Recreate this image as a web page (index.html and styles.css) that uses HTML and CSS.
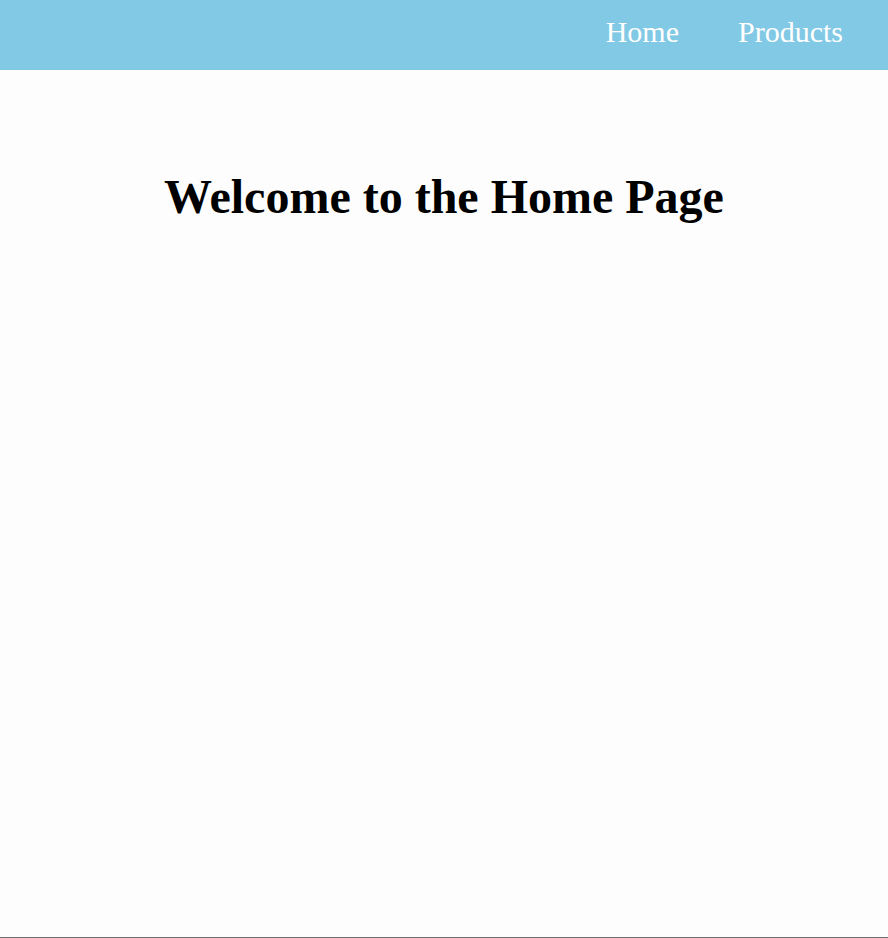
FILE: index.html
```html
<!DOCTYPE html>
<html lang="en">
<head>
<meta charset="utf-8">
<title>Home</title>
<link rel="stylesheet" href="styles.css">
</head>
<body>
<div class="page">
  <header class="topbar">
    <nav class="nav">
      <a class="nav-link" href="#">Home</a>
      <a class="nav-link" href="#">Products</a>
    </nav>
  </header>
  <main class="content">
    <h1 class="title">Welcome to the Home Page</h1>
  </main>
</div>
</body>
</html>
```
FILE: styles.css
```css
html, body {
  margin: 0;
  padding: 0;
  background: #fdfdfd;
  font-family: "Liberation Serif", "Times New Roman", serif;
}
.page {
  min-height: 100vh;
  box-sizing: border-box;
  border-bottom: 1px solid #6e6e6e;
  display: flex;
  flex-direction: column;
}
.topbar {
  height: 70px;
  background: #82c9e5;
  display: flex;
  align-items: center;
  justify-content: flex-end;
  padding-right: 45px;
}
.nav {
  display: flex;
  gap: 59px;
  margin-top: -6px;
}
.nav-link {
  color: #ffffff;
  text-decoration: none;
  font-size: 30px;
}
.content {
  flex: 1;
}
.title {
  margin: 99px 0 0;
  text-align: center;
  font-size: 48px;
  font-weight: bold;
  color: #000;
}
```
